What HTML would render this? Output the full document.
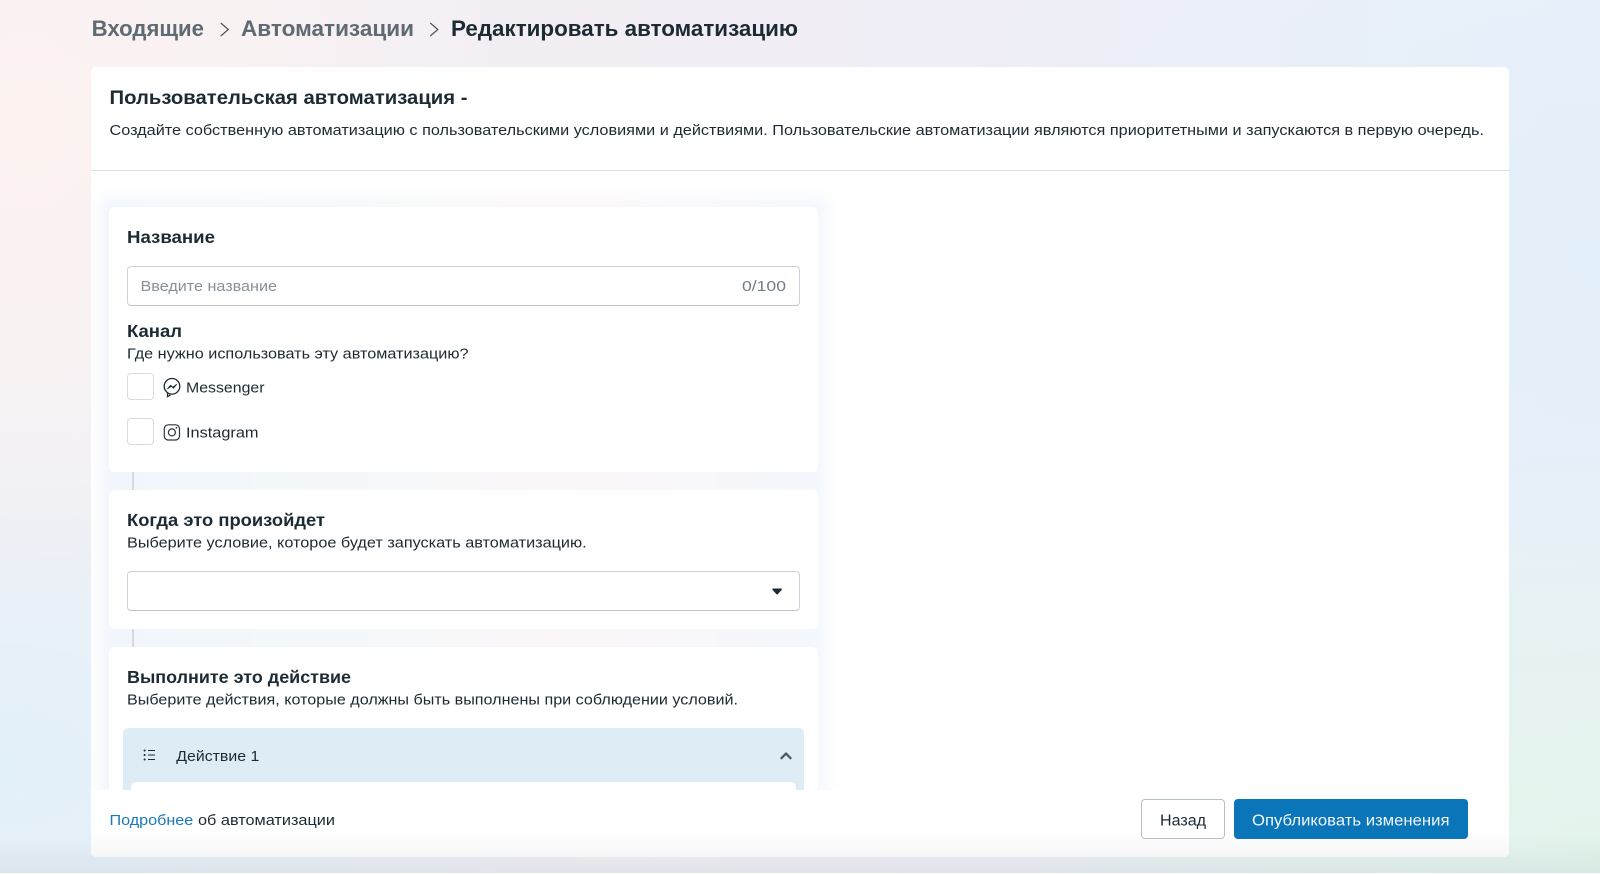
<!DOCTYPE html>
<html lang="ru">
<head>
<meta charset="utf-8">
<title>Редактировать автоматизацию</title>
<style>
html,body{margin:0;padding:0;width:1600px;height:874px;overflow:hidden;background:#fff}
*{box-sizing:border-box}
.abs,.page div{position:absolute}
.page{position:absolute;left:0;top:0;width:1600px;height:873px;overflow:hidden;
background:
radial-gradient(480px 480px at 2% 14%,#fcf3f1 0%,rgba(252,243,241,0) 100%),
radial-gradient(620px 440px at 0% 88%,#e2f0fa 0%,rgba(226,240,250,0) 100%),
radial-gradient(640px 400px at 100% 98%,#e4f5ec 0%,rgba(228,245,236,0) 100%),
radial-gradient(700px 520px at 100% 30%,#e3effa 0%,rgba(227,239,250,0) 100%),
linear-gradient(90deg,#f5f0f3 0%,#f1eef5 50%,#ebf0f9 100%)}
.main{left:91px;top:67px;width:1418px;height:790px;background:#fff;border-radius:5px;overflow:hidden}
.divider{left:0;top:103px;width:100%;height:1px;background:#e0e2e7}
.glow{left:9px;top:131px;width:727px;height:600px;filter:blur(7px);
background:linear-gradient(90deg,#f0f6fc 0%,#f4f8fa 30%,#fbf7f8 62%,#f7f7fb 88%,#f3f7fd 100%)}
.card{left:18px;width:709px;background:#fff;border-radius:6px}
.line{left:41px;width:2px;background:#d6dadd}
.field{left:36px;width:673px;height:40px;background:#fff;border:1px solid #cbd2d9;border-bottom-color:#bcc4cc;border-radius:4px}
.check{left:36px;width:27px;height:27px;background:#fff;border:1px solid #d5dbe1;border-radius:4px}
.action{left:32px;top:661px;width:681px;height:80px;background:#deecf5;border-radius:5px}
.actionbody{left:40px;top:715px;width:665px;height:30px;background:#fff;border-radius:5px 5px 0 0}
.footer{left:0;top:723px;width:100%;height:67px;background:linear-gradient(180deg,#fff 0%,#fff 62%,#f6f6f6 100%)}
.back{left:1141px;top:799px;width:84px;height:40px;background:#fff;border:1px solid #b5bfc9;border-radius:4px}
.pub{left:1234px;top:799px;width:234px;height:40px;background:#0a75b9;border-radius:4px}
.fade{left:0;top:835px;width:1600px;height:38px;background:linear-gradient(180deg,rgba(180,195,200,0),rgba(180,195,200,.26))}
svg.overlay{position:absolute;left:0;top:0;font-family:"Liberation Sans","DejaVu Sans",sans-serif}
text{fill:#1c2b33;font-size:15px}
.h{font-weight:700;font-size:17.5px}
.bc{font-weight:700;font-size:22px}
</style>
</head>
<body>
<div class="page">
  <div class="fade"></div>
  <div class="main">
    <div class="divider"></div>
    <div class="glow"></div>
    <div class="card" style="top:140px;height:265px"></div>
    <div class="line" style="top:405px;height:18px"></div>
    <div class="card" style="top:423px;height:139px"></div>
    <div class="line" style="top:562px;height:18px"></div>
    <div class="card" style="top:580px;height:160px"></div>
    <div class="field" style="top:199px"></div>
    <div class="check" style="top:306px"></div>
    <div class="check" style="top:351px"></div>
    <div class="field" style="top:504px"></div>
    <div class="action"></div>
    <div class="actionbody"></div>
    <div class="footer"></div>
  </div>
  <div class="back"></div>
  <div class="pub"></div>
</div>
<svg class="overlay" width="1600" height="874" viewBox="0 0 1600 874" xmlns="http://www.w3.org/2000/svg">
  <text class="bc" x="91.7" y="36" textLength="112.3" lengthAdjust="spacingAndGlyphs" style="fill:#5f6b73">Входящие</text>
  <path d="M220.8 23l7.5 6.5-7.5 6.5" fill="none" stroke="#4a555d" stroke-width="1.2"/>
  <text class="bc" x="241" y="36" textLength="173" lengthAdjust="spacingAndGlyphs" style="fill:#5f6b73">Автоматизации</text>
  <path d="M430.3 23l7.5 6.5-7.5 6.5" fill="none" stroke="#4a555d" stroke-width="1.2"/>
  <text class="bc" x="451" y="36" textLength="347" lengthAdjust="spacingAndGlyphs">Редактировать автоматизацию</text>

  <text x="109.5" y="104" textLength="358" lengthAdjust="spacingAndGlyphs" style="font-weight:700;font-size:19.5px">Пользовательская автоматизация -</text>
  <text x="109.5" y="135" textLength="1374.5" lengthAdjust="spacingAndGlyphs">Создайте собственную автоматизацию с пользовательскими условиями и действиями. Пользовательские автоматизации являются приоритетными и запускаются в первую очередь.</text>

  <text class="h" x="127" y="243" textLength="88" lengthAdjust="spacingAndGlyphs">Название</text>
  <text x="140.5" y="291" textLength="136.5" lengthAdjust="spacingAndGlyphs" style="fill:#87919a">Введите название</text>
  <text x="742" y="291" textLength="44" lengthAdjust="spacingAndGlyphs" style="fill:#737e87">0/100</text>

  <text class="h" x="127" y="337" textLength="55" lengthAdjust="spacingAndGlyphs">Канал</text>
  <text x="127" y="358.7" textLength="341.5" lengthAdjust="spacingAndGlyphs">Где нужно использовать эту автоматизацию?</text>

  <circle cx="172" cy="386.3" r="7.8" fill="none" stroke="#1c2b33" stroke-width="1.3"/>
  <path d="M167.5 393.4v3.2l3-1.7" fill="none" stroke="#1c2b33" stroke-width="1.3"/>
  <path d="M167.6 388.7l3-3.4 2.2 1.9 3.7-2.7-3 3.6-2.2-1.9z" fill="#1c2b33" stroke="#1c2b33" stroke-width=".9" stroke-linejoin="round"/>
  <text x="186" y="392.3" textLength="78.5" lengthAdjust="spacingAndGlyphs">Messenger</text>

  <rect x="164.3" y="424.8" width="15.2" height="15.2" rx="4" fill="none" stroke="#2a3840" stroke-width="1.2"/>
  <circle cx="171.9" cy="432.4" r="3.5" fill="none" stroke="#2a3840" stroke-width="1.2"/>
  <circle cx="176.4" cy="427.9" r=".9" fill="#2a3840"/>
  <text x="186" y="437.5" textLength="72.5" lengthAdjust="spacingAndGlyphs">Instagram</text>

  <text class="h" x="127" y="526" textLength="198" lengthAdjust="spacingAndGlyphs">Когда это произойдет</text>
  <text x="127" y="547.3" textLength="459.7" lengthAdjust="spacingAndGlyphs">Выберите условие, которое будет запускать автоматизацию.</text>
  <path d="M773.3 588.5h7.6a.9.9 0 0 1 .7 1.5l-3.6 4a1 1 0 0 1-1.7 0l-3.7-4a.9.9 0 0 1 .7-1.5z" fill="#1c2b33"/>

  <text class="h" x="127" y="683" textLength="224" lengthAdjust="spacingAndGlyphs">Выполните это действие</text>
  <text x="127" y="704.3" textLength="611" lengthAdjust="spacingAndGlyphs">Выберите действия, которые должны быть выполнены при соблюдении условий.</text>

  <path d="M148 750.5h7M148 755h7M148 759.5h7" fill="none" stroke="#1c2b33" stroke-width="1.1"/>
  <circle cx="144.6" cy="750.5" r="1.05" fill="#1c2b33"/><circle cx="144.6" cy="755" r="1.05" fill="#1c2b33"/><circle cx="144.6" cy="759.5" r="1.05" fill="#1c2b33"/>
  <text x="176.3" y="761" textLength="83" lengthAdjust="spacingAndGlyphs">Действие 1</text>
  <path d="M780.8 758.8l5.2-5.2 5.2 5.2" fill="none" stroke="#4b5760" stroke-width="2.2"/>

  <text x="109.5" y="825" textLength="83.7" lengthAdjust="spacingAndGlyphs" style="fill:#1a78bd">Подробнее</text>
  <text x="198" y="825" textLength="137" lengthAdjust="spacingAndGlyphs">об автоматизации</text>

  <text x="1160" y="825.3" textLength="46" lengthAdjust="spacingAndGlyphs" style="font-size:15.5px">Назад</text>
  <text x="1252" y="825.3" textLength="197.5" lengthAdjust="spacingAndGlyphs" style="font-size:15.5px;fill:#f2f7fb">Опубликовать изменения</text>
</svg>
</body>
</html>
